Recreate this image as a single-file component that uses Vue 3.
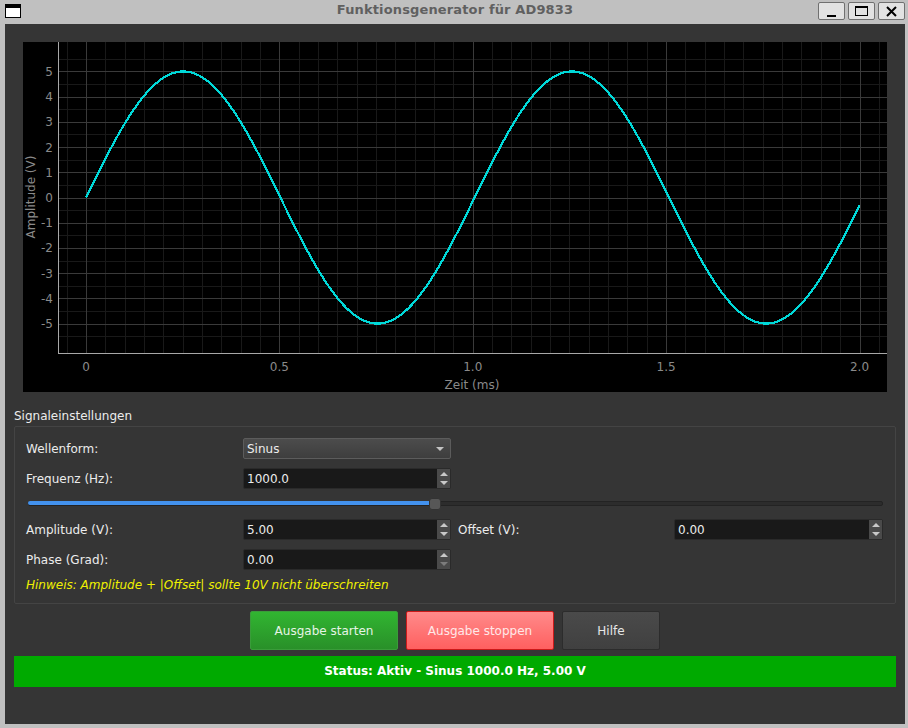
<script setup>
import { computed } from 'vue'

const xOf = (t) => 86 + 386.75 * t - 23
const yOf = (v) => 197.5 - 25.22 * v - 42

const minorX = []
for (let i = -1; i <= 41; i++) if (i % 10 !== 0) minorX.push(xOf(i * 0.05))
const majorX = [0, 0.5, 1, 1.5, 2]

const minorY = []
for (let i = -11; i <= 11; i++) if (i % 2 !== 0) minorY.push(yOf(i * 0.5))
const majorY = [5, 4, 3, 2, 1, 0, -1, -2, -3, -4, -5]

const curve = computed(() => {
  const pts = []
  for (let i = 0; i < 200; i++) {
    const t = (i / 199) * 2
    const v = 5 * Math.sin(2 * Math.PI * (i * 0.01))
    pts.push(xOf(t).toFixed(2) + ',' + yOf(v).toFixed(2))
  }
  return pts.join(' ')
})
</script>

<template>
  <div class="screen">
    <div class="titlebar">
      <div class="win-icon"></div>
      <div class="title">Funktionsgenerator für AD9833</div>
      <div class="win-buttons">
        <button class="win-btn">
          <svg width="11" height="11" viewBox="0 0 11 11"><rect x="1" y="9" width="9" height="2" fill="#000" /></svg>
        </button>
        <button class="win-btn">
          <svg width="14" height="11" viewBox="0 0 14 11"><rect x="0.5" y="0.5" width="12" height="9" fill="none" stroke="#000" /><rect x="0" y="0" width="13" height="2" fill="#000" /></svg>
        </button>
        <button class="win-btn">
          <svg width="11" height="11" viewBox="0 0 11 11"><path d="M1 1 L10 10 M10 1 L1 10" stroke="#000" stroke-width="2" fill="none" /></svg>
        </button>
      </div>
    </div>

    <div class="window">
      <div class="plot">
        <svg width="864" height="350" viewBox="0 0 864 350">
          <g stroke="#191919" stroke-width="1">
            <line v-for="x in minorX" :key="'mx' + x" :x1="Math.round(x) + 0.5" y1="0" :x2="Math.round(x) + 0.5" y2="311" />
            <line v-for="y in minorY" :key="'my' + y" x1="35" :y1="Math.round(y) + 0.5" x2="864" :y2="Math.round(y) + 0.5" />
          </g>
          <g stroke="#3a3a3a" stroke-width="1">
            <line v-for="t in majorX" :key="'gx' + t" :x1="Math.round(xOf(t)) + 0.5" y1="0" :x2="Math.round(xOf(t)) + 0.5" y2="311" />
            <line v-for="v in majorY" :key="'gy' + v" x1="35" :y1="Math.round(yOf(v)) + 0.5" x2="864" :y2="Math.round(yOf(v)) + 0.5" />
          </g>
          <polyline :points="curve" fill="none" stroke="#00d8d8" stroke-width="2.2" shape-rendering="crispEdges" />
          <line x1="35.5" y1="0" x2="35.5" y2="311" stroke="#a8a8a8" />
          <line x1="35" y1="311.5" x2="864" y2="311.5" stroke="#a8a8a8" />
          <g class="tick" text-anchor="end">
            <text v-for="v in majorY" :key="'ty' + v" x="30" :y="yOf(v) + 4.5">{{ v }}</text>
          </g>
          <g class="tick" text-anchor="middle">
            <text v-for="t in majorX" :key="'tx' + t" :x="xOf(t)" y="329">{{ t === 0 ? '0' : t.toFixed(1) }}</text>
          </g>
          <text class="tick" x="449" y="347" text-anchor="middle">Zeit (ms)</text>
          <text class="tick" transform="translate(11.5 155) rotate(-90)" text-anchor="middle">Amplitude (V)</text>
        </svg>
      </div>

      <div class="group-title">Signaleinstellungen</div>
      <div class="group">
        <div class="form">
          <label>Wellenform:</label>
          <div class="combo">
            <span>Sinus</span>
            <svg width="8" height="4" viewBox="0 0 8 4"><path d="M0 0 H8 L4 4 Z" fill="#c4c4c4" /></svg>
          </div>
          <div></div>
          <div></div>

          <label>Frequenz (Hz):</label>
          <div class="spin">
            <span class="spin-value">1000.0</span>
            <div class="spin-arrows">
              <svg width="8" height="4" viewBox="0 0 8 4"><path d="M0 4 H8 L4 0 Z" fill="#c8c8c8" /></svg>
              <svg width="8" height="4" viewBox="0 0 8 4"><path d="M0 0 H8 L4 4 Z" fill="#c8c8c8" /></svg>
            </div>
          </div>
          <div></div>
          <div></div>

          <div class="slider">
            <div class="slider-fill"></div>
            <div class="slider-handle"></div>
          </div>

          <label>Amplitude (V):</label>
          <div class="spin">
            <span class="spin-value">5.00</span>
            <div class="spin-arrows">
              <svg width="8" height="4" viewBox="0 0 8 4"><path d="M0 4 H8 L4 0 Z" fill="#c8c8c8" /></svg>
              <svg width="8" height="4" viewBox="0 0 8 4"><path d="M0 0 H8 L4 4 Z" fill="#c8c8c8" /></svg>
            </div>
          </div>
          <label>Offset (V):</label>
          <div class="spin">
            <span class="spin-value">0.00</span>
            <div class="spin-arrows">
              <svg width="8" height="4" viewBox="0 0 8 4"><path d="M0 4 H8 L4 0 Z" fill="#c8c8c8" /></svg>
              <svg width="8" height="4" viewBox="0 0 8 4"><path d="M0 0 H8 L4 4 Z" fill="#c8c8c8" /></svg>
            </div>
          </div>

          <label>Phase (Grad):</label>
          <div class="spin">
            <span class="spin-value">0.00</span>
            <div class="spin-arrows">
              <svg width="8" height="4" viewBox="0 0 8 4"><path d="M0 4 H8 L4 0 Z" fill="#c8c8c8" /></svg>
              <svg width="8" height="4" viewBox="0 0 8 4"><path d="M0 0 H8 L4 4 Z" fill="#7c7c7c" /></svg>
            </div>
          </div>
          <div></div>
          <div></div>
        </div>
        <div class="hint">Hinweis: Amplitude + |Offset| sollte 10V nicht überschreiten</div>
      </div>

      <div class="actions">
        <button class="btn btn-start">Ausgabe starten</button>
        <button class="btn btn-stop">Ausgabe stoppen</button>
        <button class="btn btn-help">Hilfe</button>
      </div>

      <div class="status">Status: Aktiv - Sinus 1000.0 Hz, 5.00 V</div>
    </div>
  </div>
</template>

<style>
html, body {
  margin: 0;
  background: #c0c0c0;
}
</style>

<style scoped>
.screen {
  width: 908px;
  height: 728px;
  background: #c0c0c0;
  font-family: "DejaVu Sans", sans-serif;
  font-size: 12px;
  color: #ececec;
  overflow: hidden;
}

.titlebar {
  height: 24px;
  display: flex;
  align-items: flex-start;
  position: relative;
}

.win-icon {
  width: 16px;
  height: 14px;
  margin: 4px 0 0 5px;
  box-sizing: border-box;
  background: #fff;
  border: 1px solid #000;
  border-top-width: 4px;
}

.title {
  position: absolute;
  left: 2px;
  right: 0;
  top: 1px;
  text-align: center;
  font-size: 13px;
  font-weight: bold;
  letter-spacing: 0.14px;
  color: #606060;
  line-height: 17px;
}

.win-buttons {
  margin-left: auto;
  margin-right: 3px;
  margin-top: 2px;
  display: flex;
  gap: 3px;
  position: relative;
}

.win-btn {
  width: 27px;
  height: 18px;
  padding: 0;
  box-sizing: border-box;
  border: 1px solid #707070;
  border-radius: 2px;
  background: #e2e2e2;
  display: flex;
  align-items: center;
  justify-content: center;
}

.window {
  width: 900px;
  height: 700px;
  margin-left: 5px;
  padding: 18px 9px 0;
  box-sizing: border-box;
  background: #353535;
}

.plot {
  margin: 0 9px;
  width: 864px;
  height: 350px;
  background: #000;
}

.plot svg {
  display: block;
}

.tick {
  font-family: "DejaVu Sans", sans-serif;
  font-size: 12px;
  fill: #8a8a8a;
}

.group-title {
  margin-top: 17px;
  line-height: 15px;
  height: 17px;
}

.group {
  height: 178px;
  box-sizing: border-box;
  border: 1px solid #444;
  border-radius: 2px;
  padding: 11px 11px 0;
}

.form {
  display: grid;
  grid-template-columns: 210px 208px 209px 209px;
  grid-template-rows: 21px 21px 12px 21px 21px;
  column-gap: 7px;
  row-gap: 9px;
  align-items: center;
}

.form label {
  line-height: 21px;
  padding-top: 1px;
}

.combo,
.spin {
  height: 21px;
  box-sizing: border-box;
  display: flex;
  align-items: center;
  border-radius: 2px;
}

.combo {
  justify-content: space-between;
  padding: 0 6px 0 3px;
  border: 1px solid #5c5c5c;
  background: linear-gradient(#4c4c4c, #3e3e3e);
}

.spin {
  background: #191919;
  border: 1px solid #2a2a2a;
}

.spin-value {
  flex: 1;
  padding-left: 3px;
}

.spin-arrows {
  width: 13px;
  height: 100%;
  box-sizing: border-box;
  padding-bottom: 1px;
  background: #4a4a4a;
  display: flex;
  flex-direction: column;
  align-items: center;
  justify-content: center;
  gap: 5px;
}

.spin-arrows svg {
  display: block;
}

.slider {
  grid-column: 1 / -1;
  height: 5px;
  margin: -2px 0 0 2px;
  box-sizing: border-box;
  background: #2c2c2c;
  border: 1px solid #232323;
  border-radius: 2px;
  position: relative;
  display: flex;
  align-items: center;
}

.slider-fill {
  width: 402px;
  height: 4px;
  margin: -1px;
  background: #4392ee;
  border-radius: 2px 0 0 2px;
}

.slider-handle {
  position: absolute;
  left: 400px;
  top: -4px;
  width: 12px;
  height: 12px;
  box-sizing: border-box;
  background: #575757;
  border: 1px solid #333;
  border-radius: 3px;
}

.hint {
  margin-top: 8px;
  line-height: 15px;
  font-style: italic;
  color: #f0f000;
}

.actions {
  display: flex;
  justify-content: center;
  gap: 8px;
  margin-top: 7px;
}

.btn {
  height: 39px;
  box-sizing: border-box;
  font-family: inherit;
  font-size: 12px;
  border-radius: 2px;
  padding: 0;
}

.btn-start {
  width: 148px;
  color: #e6f4e6;
  background: linear-gradient(#31b531, #299029);
  border: 1px solid #3a9c3a;
}

.btn-stop {
  width: 148px;
  color: #ffe8e8;
  background: linear-gradient(#ff8a8a, #ff6060);
  border: 1px solid #cc1a1a;
}

.btn-help {
  width: 98px;
  color: #e6e6e6;
  background: linear-gradient(#4a4a4a, #404040);
  border: 1px solid #2c2c2c;
}

.status {
  margin-top: 6px;
  height: 31px;
  line-height: 31px;
  text-align: center;
  font-weight: bold;
  color: #fff;
  background: #00aa00;
}
</style>
